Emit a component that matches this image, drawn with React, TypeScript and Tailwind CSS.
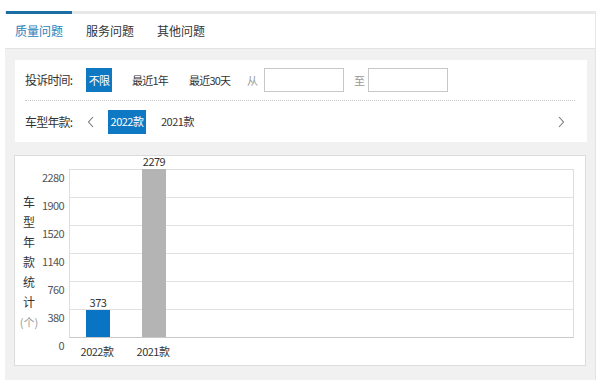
import React from "react";

const FONT = {
  fontFamily: '"Noto Sans CJK SC", "Liberation Sans", sans-serif',
};

const yTicks = ["2280", "1900", "1520", "1140", "760", "380", "0"];
const bars = [
  { name: "2022款", value: 373, color: "bg-[#0a74c4]", left: "left-[16px]" },
  { name: "2021款", value: 2279, color: "bg-[#b4b4b4]", left: "left-[72px]" },
];

function Chevron({ dir }: { dir: "left" | "right" }) {
  return (
    <svg width="8" height="12" viewBox="0 0 8 12" className="text-[#777]">
      <polyline
        points={dir === "left" ? "6,1 1.5,6 6,11" : "2,1 6.5,6 2,11"}
        fill="none"
        stroke="currentColor"
        strokeWidth="1.1"
      />
    </svg>
  );
}

export default function App() {
  return (
    <div className="w-[600px] h-[380px] bg-white overflow-hidden text-[#333]" style={FONT}>
      <div className="pt-[11px] pl-[5px] pr-[4px]">
        {/* tabs */}
        <div className="flex h-[38px] border-t-[3px] border-[#e8e8e8] border-b border-b-[#e2e2e2] border-r border-r-[#e8e8e8]">
          <div className="-mt-[3px] ml-[1px] w-[66px] border-t-[3px] border-[#1b6ea3] flex items-center justify-center text-[12px] text-[#2a7fba]">
            质量问题
          </div>
          <div className="w-[76px] flex items-center justify-center text-[12px]">服务问题</div>
          <div className="w-[66px] flex items-center justify-center text-[12px]">其他问题</div>
        </div>

        <div className="bg-[#f1f1f1] h-[340px] pt-[11px] pl-[10px] pr-[8px] border-r border-r-[#e4e4e4]">
          {/* filters */}
          <div className="bg-white h-[82px] pl-[10px] pr-[12px]">
            <div className="flex items-center h-[41px] border-b border-dotted border-[#c8c8c8] text-[11px] tracking-[-0.8px] whitespace-nowrap">
              <span className="text-[12px] w-[61px]">投诉时间:</span>
              <span className="bg-[#0e78c2] text-white h-[24px] w-[26px] flex items-center justify-center">
                不限
              </span>
              <span className="ml-[20px] w-[57px]">最近1年</span>
              <span className="w-[58px]">最近30天</span>
              <span className="w-[17px] text-[#999]">从</span>
              <span className="w-[80px] h-[24px] border border-[#c8c8c8]" />
              <span className="ml-[10px] w-[14px] text-[#999]">至</span>
              <span className="w-[80px] h-[24px] border border-[#c8c8c8]" />
            </div>
            <div className="flex items-center h-[41px] text-[11px] tracking-[-0.5px] whitespace-nowrap">
              <span className="text-[12px] tracking-[-0.8px] w-[62px]">车型年款:</span>
              <Chevron dir="left" />
              <span className="ml-[13px] bg-[#0e78c2] text-white h-[24px] w-[38px] flex items-center justify-center">
                2022款
              </span>
              <span className="ml-[15px]">2021款</span>
              <span className="ml-auto mr-[10px]">
                <Chevron dir="right" />
              </span>
            </div>
          </div>

          {/* chart */}
          <div className="mt-[13px] -ml-[1px] mr-[1px] h-[211px] bg-white border border-[#dcdcdc] pt-[13px] flex">
            <div className="w-[28px] pt-[23px] flex flex-col items-center text-[12px] leading-[20px]">
              {"车型年款统计".split("").map((c) => (
                <span key={c}>{c}</span>
              ))}
              <span className="text-[#999] text-[11px]">(个)</span>
            </div>
            <div className="w-[21px] flex flex-col items-end text-[11px] tracking-[-0.6px] text-[#555]">
              {yTicks.map((t) => (
                <div key={t} className="h-[28px] leading-[16px]">
                  {t}
                </div>
              ))}
            </div>
            <div className="ml-[5px] mr-[11px] flex-1">
              <div className="relative h-[169px] border border-[#dedede] border-b-[#c9c9c9] flex flex-col">
                {[0, 1, 2, 3, 4].map((i) => (
                  <div key={i} className="h-[28px] border-b border-[#e0e0e0]" />
                ))}
                {bars.map((b) => (
                  <div
                    key={b.name}
                    className={`absolute bottom-0 w-[24px] ${b.left} ${b.color}`}
                    style={{ height: Math.round((b.value / 2280) * 168) }}
                  >
                    <div className="absolute bottom-full mb-[1px] left-1/2 -translate-x-1/2 text-[11px] tracking-[-0.5px] leading-[14px] text-[#333]">
                      {b.value}
                    </div>
                  </div>
                ))}
              </div>
              <div className="relative h-[20px] text-[11px] tracking-[-0.5px] leading-[14px]">
                {bars.map((b) => (
                  <div
                    key={b.name}
                    className={`absolute top-[6px] w-[24px] flex justify-center ${b.left}`}
                  >
                    <span className="whitespace-nowrap">{b.name}</span>
                  </div>
                ))}
              </div>
            </div>
          </div>
        </div>
      </div>
    </div>
  );
}
